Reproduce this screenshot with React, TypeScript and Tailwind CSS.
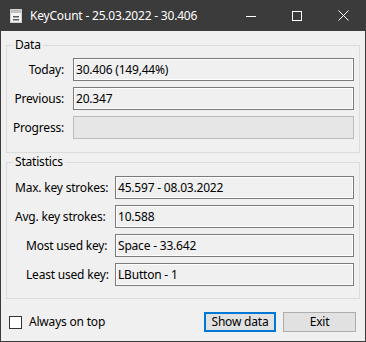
import React from 'react';

const font = { fontFamily: '"Noto Sans", "Open Sans", sans-serif' };

const AppIcon = () => (
    <svg width="16" height="16" viewBox="0 0 16 16" className="shrink-0">
        <rect x="2.5" y="1.5" width="11" height="13" fill="#f4f4f4" stroke="#d0d0d0" />
        <rect x="3" y="2" width="10" height="3" fill="#bfbfbf" />
        <rect x="5" y="8" width="6" height="1.5" fill="#5a5a5a" />
        <rect x="5" y="11" width="6" height="1.5" fill="#5a5a5a" />
    </svg>
);

const TitleBar = () => (
    <div className="h-[31px] bg-[#3b3b3b] flex items-center text-white shrink-0">
        <div className="pl-[8px] pr-[6px] flex items-center">
            <AppIcon />
        </div>
        <span className="text-[12px] leading-none tracking-[-0.2px]">KeyCount - 25.03.2022 - 30.406</span>
        <div className="ml-auto flex h-full">
            <div className="w-[46px] h-full flex items-center justify-center">
                <svg width="10" height="10" viewBox="0 0 10 10"><path d="M0 5.5h10" stroke="#fff" /></svg>
            </div>
            <div className="w-[46px] h-full flex items-center justify-center">
                <svg width="10" height="10" viewBox="0 0 10 10"><rect x="0.5" y="0.5" width="9" height="9" fill="none" stroke="#fff" /></svg>
            </div>
            <div className="w-[46px] h-full flex items-center justify-center">
                <svg width="11" height="11" viewBox="0 0 11 11"><path d="M0.5 0.5l10 10M10.5 0.5l-10 10" stroke="#fff" /></svg>
            </div>
        </div>
    </div>
);

const ValueBox = ({ value, disabled }: { value?: string; disabled?: boolean }) => (
    <div
        className={
            disabled
                ? 'flex-1 h-[23px] border border-[#bcbcbc] bg-[#e6e6e6]'
                : 'flex-1 h-[23px] border border-[#7a7a7a] bg-[#f0f0f0] shadow-[inset_1px_1px_0_#ffffff,inset_-1px_-1px_0_#ffffff] flex items-center pl-[2px] text-[12px] text-black'
        }
    >
        {value}
    </div>
);

const DataRow = ({ label, value, disabled }: { label: string; value?: string; disabled?: boolean }) => (
    <div className="flex items-center pr-[5px]">
        <div className="w-[57px] text-right text-[12px] text-black">{label}</div>
        <div className="w-[9px]" />
        <ValueBox value={value} disabled={disabled} />
    </div>
);

const StatRow = ({ label, value, indent }: { label: string; value: string; indent: string }) => (
    <div className="flex items-center pr-[5px]">
        <div className={`w-[108px] text-[12px] text-black ${indent}`}>{label}</div>
        <ValueBox value={value} />
    </div>
);

export default function App() {
    return (
        <div className="w-[366px] h-[342px] flex flex-col bg-[#f0f0f0] select-none tracking-[-0.2px]" style={font}>
            <TitleBar />
            <div className="flex-1 flex flex-col border-x border-b border-[#3b3b3b]">
                <fieldset className="mx-[5px] mt-[6px] border border-[#dcdcdc] pb-[13px]">
                    <legend className="ml-[6px] px-[2px] h-[16px] leading-[16px] text-[12px] text-black">Data</legend>
                    <div className="flex flex-col gap-[6px] mt-[5px]">
                        <DataRow label="Today:" value="30.406 (149,44%)" />
                        <DataRow label="Previous:" value="20.347" />
                        <DataRow label="Progress:" disabled />
                    </div>
                </fieldset>
                <fieldset className="mx-[5px] mt-[1px] border border-[#dcdcdc] pb-[12px]">
                    <legend className="ml-[6px] px-[2px] h-[16px] leading-[16px] text-[12px] text-black">Statistics</legend>
                    <div className="flex flex-col gap-[6px] mt-[6px]">
                        <StatRow label="Max. key strokes:" value="45.597 - 08.03.2022" indent="pl-[8px]" />
                        <StatRow label="Avg. key strokes:" value="10.588" indent="pl-[8px]" />
                        <StatRow label="Most used key:" value="Space - 33.642" indent="pl-[19px]" />
                        <StatRow label="Least used key:" value="LButton - 1" indent="pl-[19px]" />
                    </div>
                </fieldset>
                <div className="flex items-center h-[20px] mt-[13px] pl-[8px] pr-[9px]">
                    <div className="w-[13px] h-[13px] border border-[#333333] bg-white" />
                    <span className="ml-[7px] text-[12px] text-black">Always on top</span>
                    <div className="ml-auto flex gap-[7px]">
                        <button className="w-[72px] h-[20px] border-2 border-[#0078d7] bg-[#e1e1e1] text-[12px] text-black leading-none">Show data</button>
                        <button className="w-[73px] h-[20px] border border-[#adadad] bg-[#e1e1e1] text-[12px] text-black leading-none">Exit</button>
                    </div>
                </div>
            </div>
        </div>
    );
}
